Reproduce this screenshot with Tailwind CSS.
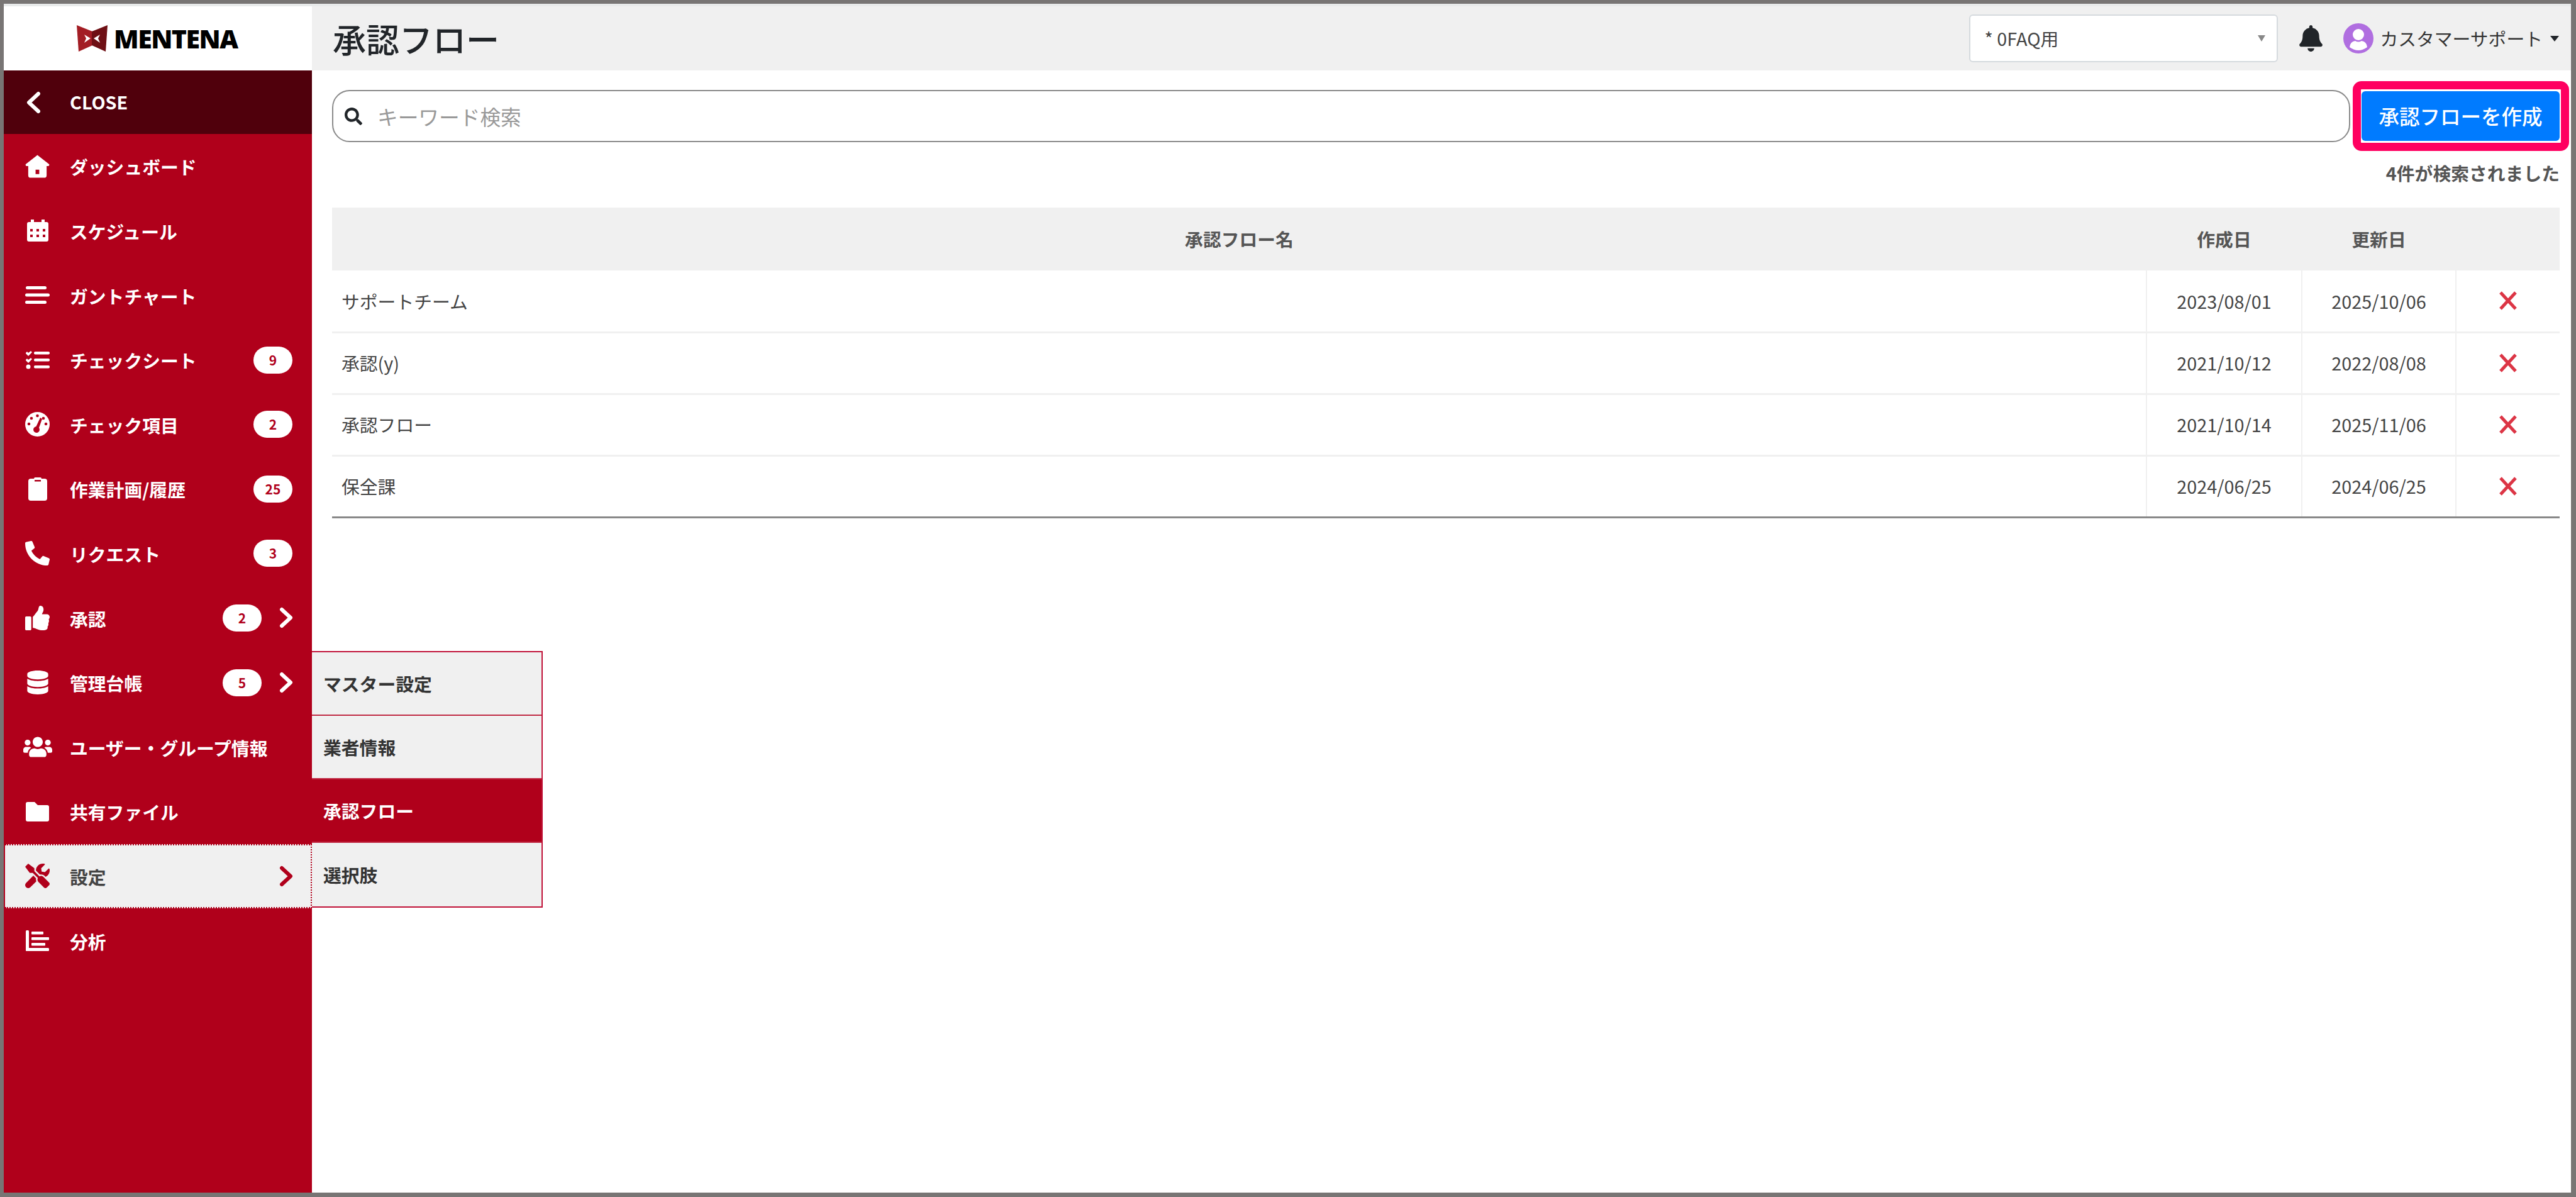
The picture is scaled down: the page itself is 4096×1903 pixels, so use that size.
<!DOCTYPE html>
<html lang="ja">
<head>
  <meta charset="UTF-8">
  <title>承認フロー</title>
  <script src="https://cdn.jsdelivr.net/npm/@tailwindcss/browser@4"></script>
</head>
<body class="bg-white">
  <div class="w-[4096px] h-[1903px] flex overflow-hidden border-t-[6px] border-l-[6px] border-r-[8px] border-b-[7px] border-[#787574] bg-white text-[28.8px] text-[#444] font-['Noto_Sans_CJK_JP','Liberation_Sans',sans-serif]">

    <!-- Sidebar -->
    <aside class="w-[490px] shrink-0 flex flex-col bg-[#b0001b] text-white font-bold leading-none">
      <div class="h-[106px] shrink-0 bg-white border-t-[4px] border-[#e8eaea] flex items-center pl-[116px] gap-[10px]">
        <svg class="w-[49px] h-[42px]" viewBox="0 0 49 42">
          <path fill="#a31d24" d="M0 0 L25 10 L25 32 L3 42Z"/>
          <path fill="#6e0f14" d="M49 0 L24 10 L24 32 L46 42Z"/>
          <path fill="#fff" d="M12 15 L22 21 L12 28 L15 21Z M37 15 L27 21 L37 28 L34 21Z"/>
        </svg>
        <span class="text-[41px] tracking-[-1.5px] text-black font-extrabold font-['Open_Sans',sans-serif]">MENTENA</span>
      </div>

      <div class="h-[101px] shrink-0 bg-[#50000c] flex items-center">
        <span class="w-[39px] ml-[34px] flex justify-start">
          <svg class="w-[26px] h-[36px]" viewBox="0 0 26 36" fill="none" stroke="currentColor" stroke-width="6" stroke-linecap="round" stroke-linejoin="round"><path d="M21 4 L6 18 L21 32"/></svg>
        </span>
        <span class="ml-[32px]">CLOSE</span>
      </div>

      <a class="h-[102.6px] shrink-0 flex items-center">
        <span class="w-[39px] ml-[34px] flex justify-center">
          <svg class="w-[40px] h-[37px] fill-current" viewBox="0 0 40 37"><path fill-rule="evenodd" d="M20 0 L39 15 Q40 17 38 18 L35 18 V33 Q35 37 31 37 H9 Q5 37 5 33 V18 L2 18 Q0 17 1 15Z M17 24 V31 H23 V24Z"/></svg>
        </span>
        <span class="ml-[32px] pt-[3px]">ダッシュボード</span>
      </a>
      <a class="h-[102.6px] shrink-0 flex items-center">
        <span class="w-[39px] ml-[34px] flex justify-center">
          <svg class="w-[34px] h-[35px] fill-current" viewBox="0 0 34 35"><path fill-rule="evenodd" d="M6 0 H11 V4 H23 V0 H28 V4 H31 Q34 4 34 7 V32 Q34 35 31 35 H3 Q0 35 0 32 V7 Q0 4 3 4 H6Z M5 15 V19 H9 V15Z M15 15 V19 H19 V15Z M25 15 V19 H29 V15Z M5 24 V28 H9 V24Z M15 24 V28 H19 V24Z M25 24 V28 H29 V24Z"/></svg>
        </span>
        <span class="ml-[32px] pt-[3px]">スケジュール</span>
      </a>
      <a class="h-[102.6px] shrink-0 flex items-center">
        <span class="w-[39px] ml-[34px] flex justify-center">
          <svg class="w-[39px] h-[28px] fill-current" viewBox="0 0 39 28"><rect x="1" y="0" width="33" height="5" rx="2.5"/><rect x="0" y="11.5" width="39" height="5" rx="2.5"/><rect x="0" y="23" width="34" height="5" rx="2.5"/></svg>
        </span>
        <span class="ml-[32px] pt-[3px]">ガントチャート</span>
      </a>
      <a class="h-[102.6px] shrink-0 flex items-center">
        <span class="w-[39px] ml-[34px] flex justify-center">
          <svg class="w-[39px] h-[29px] fill-current" viewBox="0 0 39 29"><path d="M1 3 L3 1 L5 3 L9 0 L11 2 L5 8 L1 4Z M1 14 L3 12 L5 14 L9 11 L11 13 L5 19 L1 15Z"/><circle cx="5" cy="25" r="3.5"/><rect x="14" y="1" width="25" height="4.5" rx="2"/><rect x="14" y="12" width="25" height="4.5" rx="2"/><rect x="14" y="23" width="25" height="4.5" rx="2"/></svg>
        </span>
        <span class="ml-[32px] pt-[3px]">チェックシート</span>
        <span class="ml-auto mr-[31px] w-[62px] h-[43px] rounded-full bg-white text-[#b0001b] text-[21px] flex items-center justify-center">9</span>
      </a>
      <a class="h-[102.6px] shrink-0 flex items-center">
        <span class="w-[39px] ml-[34px] flex justify-center">
          <svg class="w-[39px] h-[39px]" viewBox="0 0 39 39"><circle cx="19.5" cy="19.5" r="19.5" fill="#fff"/><g fill="#b0001b"><circle cx="19.5" cy="6" r="2.3"/><circle cx="10" cy="10" r="2.3"/><circle cx="6" cy="19" r="2.3"/><circle cx="33" cy="19" r="2.3"/><circle cx="29" cy="10" r="2.3"/><path d="M24 9 L27 11 L22 25 A5 5 0 1 1 17.5 23Z"/></g></svg>
        </span>
        <span class="ml-[32px] pt-[3px]">チェック項目</span>
        <span class="ml-auto mr-[31px] w-[62px] h-[43px] rounded-full bg-white text-[#b0001b] text-[21px] flex items-center justify-center">2</span>
      </a>
      <a class="h-[102.6px] shrink-0 flex items-center">
        <span class="w-[39px] ml-[34px] flex justify-center">
          <svg class="w-[30px] h-[37px]" viewBox="0 0 30 37"><path fill="#fff" d="M4 2 H9 Q9 0 11 0 H19 Q21 0 21 2 H26 Q30 2 30 6 V33 Q30 37 26 37 H4 Q0 37 0 33 V6 Q0 2 4 2Z"/><rect x="10" y="4" width="10" height="2.5" fill="#b0001b"/></svg>
        </span>
        <span class="ml-[32px] pt-[3px]">作業計画/履歴</span>
        <span class="ml-auto mr-[31px] w-[62px] h-[43px] rounded-full bg-white text-[#b0001b] text-[21px] flex items-center justify-center">25</span>
      </a>
      <a class="h-[102.6px] shrink-0 flex items-center">
        <span class="w-[39px] ml-[34px] flex justify-center">
          <svg class="w-[39px] h-[39px] fill-current -scale-x-100" viewBox="0 0 512 512"><path d="M493.4 24.6l-104-24c-11.3-2.6-22.9 3.3-27.5 13.9l-48 112c-4.2 9.8-1.4 21.3 6.9 28l60.6 49.6c-36 76.7-98.9 140.5-177.2 177.2l-49.6-60.6c-6.8-8.3-18.2-11.1-28-6.9l-112 48C3.9 366.5-2 378.1.6 389.4l24 104C27.1 504.2 36.7 512 48 512c256.1 0 464-207.5 464-464 0-11.2-7.7-20.9-18.6-23.4z"/></svg>
        </span>
        <span class="ml-[32px] pt-[3px]">リクエスト</span>
        <span class="ml-auto mr-[31px] w-[62px] h-[43px] rounded-full bg-white text-[#b0001b] text-[21px] flex items-center justify-center">3</span>
      </a>
      <a class="h-[102.6px] shrink-0 flex items-center">
        <span class="w-[39px] ml-[34px] flex justify-center">
          <svg class="w-[39px] h-[39px] fill-current" viewBox="0 0 512 512"><path d="M104 224H24c-13.255 0-24 10.745-24 24v240c0 13.255 10.745 24 24 24h80c13.255 0 24-10.745 24-24V248c0-13.255-10.745-24-24-24zM384 81.452c0 42.416-25.97 66.208-33.277 94.548h101.723c33.397 0 59.397 27.746 59.553 58.098.084 17.938-7.546 37.249-19.439 49.197l-.11.11c9.836 23.337 8.237 56.037-9.308 79.469 8.681 25.895-.069 57.704-16.382 74.757 4.298 17.598 2.244 32.575-6.148 44.632C440.202 511.587 389.616 512 346.839 512l-2.845-.001c-48.287-.017-87.806-17.598-119.56-31.725-15.957-7.099-36.821-15.887-52.651-16.178-6.54-.12-11.783-5.457-11.783-11.998v-213.77c0-3.2 1.282-6.271 3.558-8.521 39.614-39.144 56.648-80.587 89.117-113.111 14.804-14.832 20.188-37.236 25.393-58.902C282.515 39.293 291.817 0 312 0c24 0 72 8 72 81.452z"/></svg>
        </span>
        <span class="ml-[32px] pt-[3px]">承認</span>
        <span class="ml-auto w-[62px] h-[43px] rounded-full bg-white text-[#b0001b] text-[21px] flex items-center justify-center">2</span>
        <svg class="ml-[28px] mr-[30px] w-[22px] h-[34px]" viewBox="0 0 22 34" fill="none" stroke="currentColor" stroke-width="6" stroke-linecap="round" stroke-linejoin="round"><path d="M4 4 L18 17 L4 30"/></svg>
      </a>

      <!-- 管理台帳: the settings flyout hangs from this row -->
      <div class="relative h-[102.6px] shrink-0 flex items-center">
        <span class="w-[39px] ml-[34px] flex justify-center">
          <svg class="w-[34px] h-[38px] fill-current" viewBox="0 0 448 512"><path d="M448 73.143v45.714C448 159.143 347.667 192 224 192S0 159.143 0 118.857V73.143C0 32.857 100.333 0 224 0s224 32.857 224 73.143zM448 176v102.857C448 319.143 347.667 352 224 352S0 319.143 0 278.857V176c48.125 33.143 136.208 48.572 224 48.572S399.874 209.143 448 176zm0 160v102.857C448 479.143 347.667 512 224 512S0 479.143 0 438.857V336c48.125 33.143 136.208 48.572 224 48.572S399.874 369.143 448 336z"/></svg>
        </span>
        <span class="ml-[32px] pt-[3px]">管理台帳</span>
        <span class="ml-auto w-[62px] h-[43px] rounded-full bg-white text-[#b0001b] text-[21px] flex items-center justify-center">5</span>
        <svg class="ml-[28px] mr-[30px] w-[22px] h-[34px]" viewBox="0 0 22 34" fill="none" stroke="currentColor" stroke-width="6" stroke-linecap="round" stroke-linejoin="round"><path d="M4 4 L18 17 L4 30"/></svg>

        <div class="absolute left-full top-[1px] z-10 w-[367px] flex flex-col border-2 border-l-0 border-[#c01238] bg-[#f0f0f0] text-[#333]">
          <a class="h-[101px] flex items-center pl-[18px] pt-[3px] border-b-2 border-[#c02a44]">マスター設定</a>
          <a class="h-[101px] flex items-center pl-[18px] pt-[3px] border-b-2 border-[#c02a44]">業者情報</a>
          <a class="h-[101px] flex items-center pl-[18px] pt-[3px] border-b-2 border-[#c02a44] bg-[#b0001b] text-white">承認フロー</a>
          <a class="h-[101px] flex items-center pl-[18px] pt-[3px]">選択肢</a>
        </div>
      </div>

      <a class="h-[102.6px] shrink-0 flex items-center">
        <span class="w-[39px] ml-[34px] flex justify-center">
          <svg class="w-[46px] h-[37px] shrink-0 fill-current" viewBox="0 0 640 512"><path d="M96 224c35.3 0 64-28.7 64-64s-28.7-64-64-64-64 28.7-64 64 28.7 64 64 64zm448 0c35.3 0 64-28.7 64-64s-28.7-64-64-64-64 28.7-64 64 28.7 64 64 64zm32 32h-64c-17.6 0-33.5 7.1-45.1 18.6 40.3 22.1 68.9 62 75.1 109.4h66c17.7 0 32-14.3 32-32v-32c0-35.3-28.7-64-64-64zm-256 0c61.9 0 112-50.1 112-112S381.9 32 320 32 208 82.1 208 144s50.1 112 112 112zm76.8 32h-8.3c-20.8 10-43.9 16-68.5 16s-47.6-6-68.5-16h-8.3C179.6 288 128 339.6 128 403.2V432c0 26.5 21.5 48 48 48h288c26.5 0 48-21.5 48-48v-28.8c0-63.6-51.6-115.2-115.2-115.2zm-223.7-13.4C161.5 263.1 145.6 256 128 256H64c-35.3 0-64 28.7-64 64v32c0 17.7 14.3 32 32 32h65.9c6.3-47.4 34.9-87.3 75.2-109.4z"/></svg>
        </span>
        <span class="ml-[32px] pt-[3px]">ユーザー・グループ情報</span>
      </a>
      <a class="h-[102.6px] shrink-0 flex items-center">
        <span class="w-[39px] ml-[34px] flex justify-center">
          <svg class="w-[37px] h-[31px] fill-current" viewBox="0 0 37 31"><path d="M3 0 H14 L19 5 H34 Q37 5 37 8 V28 Q37 31 34 31 H3 Q0 31 0 28 V3 Q0 0 3 0Z"/></svg>
        </span>
        <span class="ml-[32px] pt-[3px]">共有ファイル</span>
      </a>
      <a class="relative z-20 h-[102.6px] shrink-0 ml-[2px] flex items-center bg-[#f0f0f0] text-[#444] border-y-2 border-y-[#b0001b] border-r-2 border-r-[#b0001b] border-dotted">
        <span class="w-[39px] ml-[32px] flex justify-center text-[#b0001b]">
          <svg class="w-[39px] h-[39px] fill-current" viewBox="0 0 512 512"><path d="M501.1 395.7L384 278.6c-23.1-23.1-57.6-27.6-85.4-13.9L192 158.1V96L64 0 0 64l96 128h62.1l106.6 106.6c-13.6 27.8-9.2 62.3 13.9 85.4l117.1 117.1c14.6 14.6 38.2 14.6 52.7 0l52.7-52.7c14.5-14.6 14.5-38.2 0-52.7zM331.7 225c28.3 0 54.9 11 74.9 31l19.4 19.4c15.8-6.9 30.8-16.5 43.8-29.5 37.1-37.1 49.7-89.3 37.9-136.7-2.2-9-13.5-12.1-20.1-5.5l-74.4 74.4-67.9-11.3L334 98.9l74.4-74.4c6.6-6.6 3.4-17.9-5.7-20.2-47.4-11.7-99.6.9-136.6 37.9-28.5 28.5-41.9 66.1-41.2 103.6l82.1 82.1c8.1-1.9 16.5-2.9 24.7-2.9zm-103.9 82l-56.7-56.7L18.7 402.8c-25 25-25 65.5 0 90.5s65.5 25 90.5 0l123.6-123.6c-7.6-19.9-9.9-41.6-5-62.7z"/></svg>
        </span>
        <span class="ml-[32px] pt-[3px]">設定</span>
        <svg class="ml-auto mr-[28px] w-[22px] h-[34px] text-[#b0001b]" viewBox="0 0 22 34" fill="none" stroke="currentColor" stroke-width="6" stroke-linecap="round" stroke-linejoin="round"><path d="M4 4 L18 17 L4 30"/></svg>
      </a>
      <a class="h-[102.6px] shrink-0 flex items-center">
        <span class="w-[39px] ml-[34px] flex justify-center">
          <svg class="w-[37px] h-[33px] fill-current" viewBox="0 0 37 33"><rect x="0" y="0" width="5" height="33" rx="1.5"/><rect x="0" y="28" width="37" height="5" rx="1.5"/><rect x="9" y="2" width="19" height="4.5" rx="1"/><rect x="9" y="11" width="28" height="4.5" rx="1"/><rect x="9" y="20" width="22" height="4.5" rx="1"/></svg>
        </span>
        <span class="ml-[32px] pt-[3px]">分析</span>
      </a>
    </aside>

    <!-- Main -->
    <main class="flex-1 min-w-0 flex flex-col">
      <header class="h-[106px] shrink-0 bg-[#f0f0f0] border-t-[4px] border-[#e8eaea] flex items-center pl-[33px] pr-[19px]">
        <h1 class="text-[53px] font-medium leading-none text-[#212529]">承認フロー</h1>
        <div class="ml-auto w-[491px] h-[76px] pl-[22px] pr-[18px] flex items-center justify-between bg-white border-2 border-[#d5dade] rounded-[6px] text-[#444]">
          <span>* 0FAQ用</span>
          <svg class="w-[12px] h-[10px] fill-[#888]" viewBox="0 0 12 10"><path d="M0 0 H12 L6 10Z"/></svg>
        </div>
        <svg class="ml-[34px] w-[37px] h-[42px] fill-[#212529]" viewBox="0 0 448 512"><path d="M224 512c35.32 0 63.97-28.65 63.97-64H160.03c0 35.35 28.65 64 63.97 64zm215.39-149.71c-19.32-20.76-55.47-51.99-55.47-154.29 0-77.7-54.48-139.9-127.94-155.16V32c0-17.67-14.32-32-31.98-32s-31.98 14.33-31.98 32v20.84C118.56 68.1 64.08 130.3 64.08 208c0 102.3-36.15 133.53-55.47 154.29-6 6.45-8.66 14.16-8.61 21.71.11 16.4 12.98 32 32.1 32h383.8c19.12 0 32-15.6 32.1-32 .05-7.55-2.61-15.27-8.61-21.71z"/></svg>
        <svg class="ml-[33px] w-[48px] h-[48px]" viewBox="0 0 48 48"><circle cx="24" cy="24" r="24" fill="#b06ee0"/><circle cx="24" cy="18" r="9" fill="#fff"/><path fill="#fff" d="M10 38 Q11 29 19 28 Q24 31 29 28 Q37 29 38 38 Q24 48 10 38Z"/></svg>
        <span class="ml-[10px] text-[#333]">カスタマーサポート</span>
        <svg class="ml-[12px] w-[14px] h-[9px] fill-[#212529]" viewBox="0 0 14 9"><path d="M0 0 H14 L7 9Z"/></svg>
      </header>

      <div class="flex-1 min-h-0 pl-[32px] pr-[18px]">
        <div class="mt-[31px] flex items-center gap-[18px]">
          <div class="flex-1 h-[83px] flex items-center pl-[18px] border-2 border-[#8a8a8a] rounded-[28px]">
            <svg class="w-[28px] h-[28px] shrink-0 fill-[#212529]" viewBox="0 0 512 512"><path d="M505 442.7L405.3 343c-4.5-4.5-10.6-7-17-7H372c27.6-35.3 44-79.7 44-128C416 93.1 322.9 0 208 0S0 93.1 0 208s93.1 208 208 208c48.3 0 92.7-16.4 128-44v16.3c0 6.4 2.5 12.5 7 17l99.7 99.7c9.4 9.4 24.6 9.4 33.9 0l28.3-28.3c9.4-9.4 9.4-24.6.1-34zM208 336c-70.7 0-128-57.2-128-128 0-70.7 57.2-128 128-128 70.7 0 128 57.2 128 128 0 70.7-57.2 128-128 128z"/></svg>
            <input type="text" placeholder="キーワード検索" class="flex-1 ml-[24px] text-[32.7px] outline-none bg-transparent placeholder:text-[#999]">
          </div>
          <div class="relative">
            <button class="w-[315px] h-[79px] rounded-[6px] bg-[#007bff] text-white text-[32.5px] font-medium">承認フローを作成</button>
            <span class="absolute -left-[14px] -right-[15px] -top-[16px] -bottom-[16px] border-[13px] border-[#ff0060] rounded-[14px]"></span>
          </div>
        </div>

        <p class="mt-[28px] h-[42px] flex items-center justify-end font-bold text-[#555]">4件が検索されました</p>

        <table class="mt-[34px] w-full table-fixed border-collapse">
          <colgroup>
            <col>
            <col class="w-[247px]">
            <col class="w-[245px]">
            <col class="w-[165px]">
          </colgroup>
          <thead>
            <tr class="h-[100px] bg-[#f0f0f0] text-[#555] font-bold">
              <th>承認フロー名</th>
              <th>作成日</th>
              <th>更新日</th>
              <th></th>
            </tr>
          </thead>
          <tbody>
            <tr class="h-[98px] border-b-[3px] border-[#f0f0f0]">
              <td class="pl-[15px]">サポートチーム</td>
              <td class="text-center border-l-2 border-[#f0f0f0]">2023/08/01</td>
              <td class="text-center border-l-2 border-[#f0f0f0]">2025/10/06</td>
              <td class="border-l-2 border-[#f0f0f0]"><svg class="mx-auto w-[30px] h-[30px] text-[#dc3545]" viewBox="0 0 30 30" fill="none" stroke="currentColor" stroke-width="5"><path d="M3 2 L27 28 M27 2 L3 28"/></svg></td>
            </tr>
            <tr class="h-[98px] border-b-[3px] border-[#f0f0f0]">
              <td class="pl-[15px]">承認(y)</td>
              <td class="text-center border-l-2 border-[#f0f0f0]">2021/10/12</td>
              <td class="text-center border-l-2 border-[#f0f0f0]">2022/08/08</td>
              <td class="border-l-2 border-[#f0f0f0]"><svg class="mx-auto w-[30px] h-[30px] text-[#dc3545]" viewBox="0 0 30 30" fill="none" stroke="currentColor" stroke-width="5"><path d="M3 2 L27 28 M27 2 L3 28"/></svg></td>
            </tr>
            <tr class="h-[98px] border-b-[3px] border-[#f0f0f0]">
              <td class="pl-[15px]">承認フロー</td>
              <td class="text-center border-l-2 border-[#f0f0f0]">2021/10/14</td>
              <td class="text-center border-l-2 border-[#f0f0f0]">2025/11/06</td>
              <td class="border-l-2 border-[#f0f0f0]"><svg class="mx-auto w-[30px] h-[30px] text-[#dc3545]" viewBox="0 0 30 30" fill="none" stroke="currentColor" stroke-width="5"><path d="M3 2 L27 28 M27 2 L3 28"/></svg></td>
            </tr>
            <tr class="h-[98px] border-b-[3px] border-[#888]">
              <td class="pl-[15px]">保全課</td>
              <td class="text-center border-l-2 border-[#f0f0f0]">2024/06/25</td>
              <td class="text-center border-l-2 border-[#f0f0f0]">2024/06/25</td>
              <td class="border-l-2 border-[#f0f0f0]"><svg class="mx-auto w-[30px] h-[30px] text-[#dc3545]" viewBox="0 0 30 30" fill="none" stroke="currentColor" stroke-width="5"><path d="M3 2 L27 28 M27 2 L3 28"/></svg></td>
            </tr>
          </tbody>
        </table>
      </div>
    </main>
  </div>
</body>
</html>
